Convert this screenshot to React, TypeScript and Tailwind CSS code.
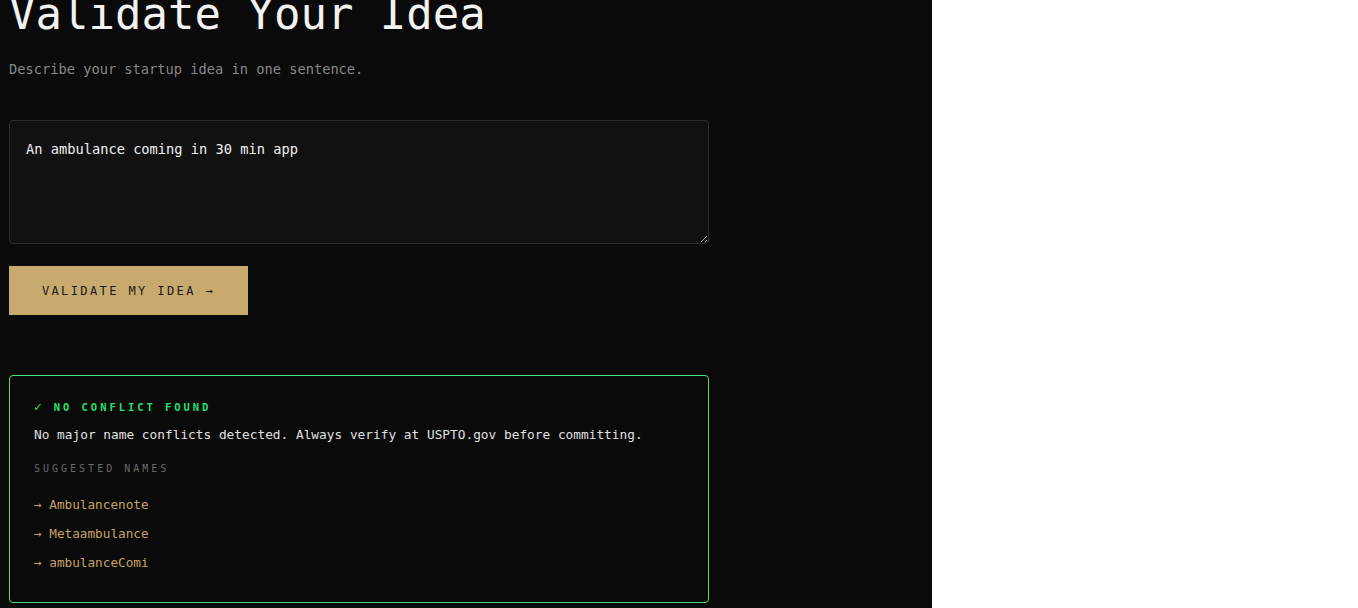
import React from "react";

const mono = { fontFamily: '"DejaVu Sans Mono", "Liberation Mono", monospace' };

export default function App() {
  const names = ["Ambulancenote", "Metaambulance", "ambulanceComi"];
  return (
    <div className="min-h-[608px] w-full bg-white">
      <div className="w-[932px] min-h-[608px] bg-[#0a0a0a] overflow-hidden" style={mono}>
        <div className="px-[9px] pb-[6px]">
          <h1 className="mt-[-12px] text-[44px] leading-[52px] text-[#f2f2f2] font-normal">
            Validate Your Idea
          </h1>
          <p className="mt-[19px] text-[13.7px] leading-[20px] text-[#888888]">
            Describe your startup idea in one sentence.
          </p>
          <textarea
            className="mt-[41px] block w-[700px] h-[124px] bg-[#111111] border border-[#2e2e2e] rounded-[4px] px-[16px] py-[18px] text-[13.7px] leading-[20px] text-[#f0f0f0] outline-none resize-y"
            defaultValue="An ambulance coming in 30 min app"
          />
          <button className="mt-[22px] block w-[239px] h-[49px] bg-[#c8aa6e] text-[#1a1a1a] text-[12px] tracking-[0.2em] text-center">
            VALIDATE MY IDEA →
          </button>
          <div className="mt-[60px] w-[700px] border border-[#4ade80] rounded-[4px] px-[24px] pt-[23px] pb-[29px]">
            <div className="flex items-center text-[10.5px] font-bold tracking-[0.28em] text-[#22e06b] leading-[16px]">
              <span className="text-[13px] font-normal mr-[12px] tracking-normal">✓</span>
              NO CONFLICT FOUND
            </div>
            <p className="mt-[10px] text-[12.8px] leading-[20px] text-[#e0e0e0]">
              No major name conflicts detected. Always verify at USPTO.gov before committing.
            </p>
            <div className="mt-[16px] text-[10px] tracking-[0.3em] text-[#6b6b6b] leading-[16px]">
              SUGGESTED NAMES
            </div>
            <ul className="mt-[18px] flex flex-col gap-[9px]">
              {names.map((n) => (
                <li key={n} className="text-[12.7px] leading-[20px] text-[#c8a265]">
                  → {n}
                </li>
              ))}
            </ul>
          </div>
        </div>
      </div>
    </div>
  );
}
